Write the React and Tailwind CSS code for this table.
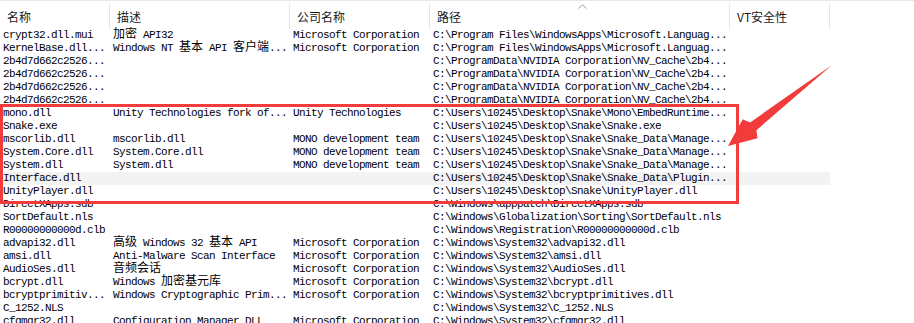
import React from 'react';

const rows = [
  ['crypt32.dll.mui', '加密 API32', 'Microsoft Corporation', 'C:\\Program Files\\WindowsApps\\Microsoft.Languag...'],
  ['KernelBase.dll...', 'Windows NT 基本 API 客户端...', 'Microsoft Corporation', 'C:\\Program Files\\WindowsApps\\Microsoft.Languag...'],
  ['2b4d7d662c2526...', '', '', 'C:\\ProgramData\\NVIDIA Corporation\\NV_Cache\\2b4...'],
  ['2b4d7d662c2526...', '', '', 'C:\\ProgramData\\NVIDIA Corporation\\NV_Cache\\2b4...'],
  ['2b4d7d662c2526...', '', '', 'C:\\ProgramData\\NVIDIA Corporation\\NV_Cache\\2b4...'],
  ['2b4d7d662c2526...', '', '', 'C:\\ProgramData\\NVIDIA Corporation\\NV_Cache\\2b4...'],
  ['mono.dll', 'Unity Technologies fork of...', 'Unity Technologies', 'C:\\Users\\10245\\Desktop\\Snake\\Mono\\EmbedRuntime...'],
  ['Snake.exe', '', '', 'C:\\Users\\10245\\Desktop\\Snake\\Snake.exe'],
  ['mscorlib.dll', 'mscorlib.dll', 'MONO development team', 'C:\\Users\\10245\\Desktop\\Snake\\Snake_Data\\Manage...'],
  ['System.Core.dll', 'System.Core.dll', 'MONO development team', 'C:\\Users\\10245\\Desktop\\Snake\\Snake_Data\\Manage...'],
  ['System.dll', 'System.dll', 'MONO development team', 'C:\\Users\\10245\\Desktop\\Snake\\Snake_Data\\Manage...'],
  ['Interface.dll', '', '', 'C:\\Users\\10245\\Desktop\\Snake\\Snake_Data\\Plugin...'],
  ['UnityPlayer.dll', '', '', 'C:\\Users\\10245\\Desktop\\Snake\\UnityPlayer.dll'],
  ['DirectXApps.sdb', '', '', 'C:\\Windows\\apppatch\\DirectXApps.sdb'],
  ['SortDefault.nls', '', '', 'C:\\Windows\\Globalization\\Sorting\\SortDefault.nls'],
  ['R00000000000d.clb', '', '', 'C:\\Windows\\Registration\\R00000000000d.clb'],
  ['advapi32.dll', '高级 Windows 32 基本 API', 'Microsoft Corporation', 'C:\\Windows\\System32\\advapi32.dll'],
  ['amsi.dll', 'Anti-Malware Scan Interface', 'Microsoft Corporation', 'C:\\Windows\\System32\\amsi.dll'],
  ['AudioSes.dll', '音频会话', 'Microsoft Corporation', 'C:\\Windows\\System32\\AudioSes.dll'],
  ['bcrypt.dll', 'Windows 加密基元库', 'Microsoft Corporation', 'C:\\Windows\\System32\\bcrypt.dll'],
  ['bcryptprimitiv...', 'Windows Cryptographic Prim...', 'Microsoft Corporation', 'C:\\Windows\\System32\\bcryptprimitives.dll'],
  ['C_1252.NLS', '', '', 'C:\\Windows\\System32\\C_1252.NLS'],
  ['cfgmgr32.dll', 'Configuration Manager DLL', 'Microsoft Corporation', 'C:\\Windows\\System32\\cfgmgr32.dll'],
];

const widths = ['w-[110px]', 'w-[180px]', 'w-[140px]', 'w-[300px]'];

// CJK runs get their own font so they fill a 12px cell like SimSun does;
// a tiny line-height keeps them on the baseline without growing the row
const MixedText = ({ text }) =>
  text.split(/([\u4e00-\u9fff]+)/).map((part, i) =>
    /[\u4e00-\u9fff]/.test(part) ? (
      <span key={i} className="font-['Noto_Sans_CJK_SC',sans-serif] text-[12px] leading-[1px] tracking-normal">
        {part}
      </span>
    ) : (
      part
    )
  );

const HeaderCell = ({ label, width }) => (
  <div className={`${width} flex h-[25px] shrink-0 items-center border-r border-[#e5e5e5] pl-[7px]`}>
    {label}
  </div>
);

export default function App() {
  return (
    <div className="relative h-[323px] w-[914px] overflow-hidden bg-white text-black">
      <div className="border-t border-[#e8e8e8] pt-[3px]">
        <div className="relative flex font-['Noto_Sans_CJK_SC',sans-serif] text-[12px] leading-none text-[#1a1a1a]">
          <HeaderCell label="名称" width="w-[110px]" />
          <HeaderCell label="描述" width="w-[180px]" />
          <HeaderCell label="公司名称" width="w-[140px]" />
          <HeaderCell label="路径" width="w-[300px]" />
          <HeaderCell label="VT安全性" width="w-[100px]" />
          <svg className="absolute left-[578px] top-0" width="9" height="5" viewBox="0 0 9 5">
            <path d="M0.5 4.5 L4.5 0.8 L8.5 4.5" fill="none" stroke="#9a9a9a" strokeWidth="1" />
          </svg>
        </div>
      </div>

      <div className="font-['Liberation_Mono',monospace] text-[11px] leading-[13px] tracking-[-0.6px]">
        {rows.map((row, r) => (
          <div
            key={r}
            className={`flex h-[13px] w-[830px] whitespace-pre ${r === 11 ? 'bg-[#f3f3f3]' : ''}`}
          >
            {row.map((cell, c) => (
              <div key={c} className={`${widths[c]} h-[13px] shrink-0 pl-[3px]`}>
                <MixedText text={cell} />
              </div>
            ))}
          </div>
        ))}
      </div>

      <div className="absolute left-0 top-[104px] h-[100px] w-[739px] border-[3px] border-[#f23b3b]" />

      <svg className="absolute left-0 top-0" width="914" height="323" viewBox="0 0 914 323">
        <polygon
          points="728,146 742.7,119.3 750.2,122.4 832,65 756.4,130.2 757.5,138.3"
          fill="#f23b3b"
        />
      </svg>
    </div>
  );
}
